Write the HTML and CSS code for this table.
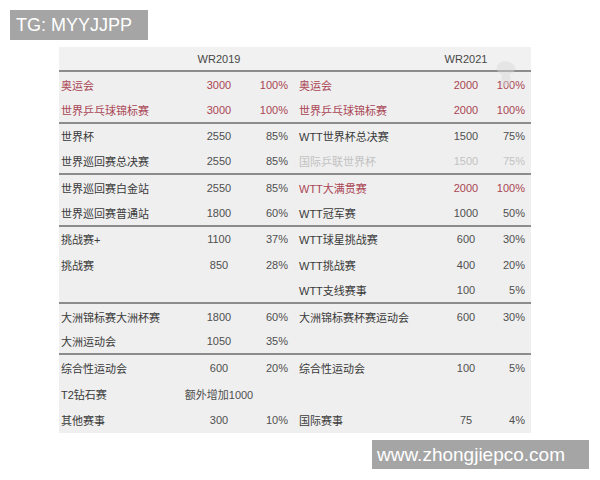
FILE: index.html
```html
<!DOCTYPE html>
<html lang="zh">
<head>
<meta charset="utf-8">
<title>WR2019 / WR2021</title>
<link rel="stylesheet" href="styles.css">
</head>
<body>
<div class="page">
  <div class="table">
    <div class="row head sep">
      <span class="c1"></span><span class="c2">WR2019</span><span class="c3"></span>
      <span class="c4"></span><span class="c5">WR2021</span><span class="c6"></span>
    </div>
    <div class="row red">
      <span class="c1">奥运会</span><span class="c2">3000</span><span class="c3">100%</span>
      <span class="c4">奥运会</span><span class="c5">2000</span><span class="c6">100%</span>
    </div>
    <div class="row red sep">
      <span class="c1">世界乒乓球锦标赛</span><span class="c2">3000</span><span class="c3">100%</span>
      <span class="c4">世界乒乓球锦标赛</span><span class="c5">2000</span><span class="c6">100%</span>
    </div>
    <div class="row">
      <span class="c1">世界杯</span><span class="c2">2550</span><span class="c3">85%</span>
      <span class="c4">WTT世界杯总决赛</span><span class="c5">1500</span><span class="c6">75%</span>
    </div>
    <div class="row sep">
      <span class="c1">世界巡回赛总决赛</span><span class="c2">2550</span><span class="c3">85%</span>
      <span class="c4 faded">国际乒联世界杯</span><span class="c5 faded">1500</span><span class="c6 faded">75%</span>
    </div>
    <div class="row">
      <span class="c1">世界巡回赛白金站</span><span class="c2">2550</span><span class="c3">85%</span>
      <span class="c4 redt">WTT大满贯赛</span><span class="c5 redt">2000</span><span class="c6 redt">100%</span>
    </div>
    <div class="row sep">
      <span class="c1">世界巡回赛普通站</span><span class="c2">1800</span><span class="c3">60%</span>
      <span class="c4">WTT冠军赛</span><span class="c5">1000</span><span class="c6">50%</span>
    </div>
    <div class="row">
      <span class="c1">挑战赛+</span><span class="c2">1100</span><span class="c3">37%</span>
      <span class="c4">WTT球星挑战赛</span><span class="c5">600</span><span class="c6">30%</span>
    </div>
    <div class="row">
      <span class="c1">挑战赛</span><span class="c2">850</span><span class="c3">28%</span>
      <span class="c4">WTT挑战赛</span><span class="c5">400</span><span class="c6">20%</span>
    </div>
    <div class="row sep">
      <span class="c1"></span><span class="c2"></span><span class="c3"></span>
      <span class="c4">WTT支线赛事</span><span class="c5">100</span><span class="c6">5%</span>
    </div>
    <div class="row">
      <span class="c1">大洲锦标赛大洲杯赛</span><span class="c2">1800</span><span class="c3">60%</span>
      <span class="c4">大洲锦标赛杯赛运动会</span><span class="c5">600</span><span class="c6">30%</span>
    </div>
    <div class="row sep">
      <span class="c1">大洲运动会</span><span class="c2">1050</span><span class="c3">35%</span>
      <span class="c4"></span><span class="c5"></span><span class="c6"></span>
    </div>
    <div class="row">
      <span class="c1">综合性运动会</span><span class="c2">600</span><span class="c3">20%</span>
      <span class="c4">综合性运动会</span><span class="c5">100</span><span class="c6">5%</span>
    </div>
    <div class="row">
      <span class="c1">T2钻石赛</span><span class="c2">额外增加1000</span><span class="c3"></span>
      <span class="c4"></span><span class="c5"></span><span class="c6"></span>
    </div>
    <div class="row">
      <span class="c1">其他赛事</span><span class="c2">300</span><span class="c3">10%</span>
      <span class="c4">国际赛事</span><span class="c5">75</span><span class="c6">4%</span>
    </div>
    <svg class="blob" width="28" height="30" viewBox="0 0 28 30" aria-hidden="true">
      <path d="M9 3 C14 1 21 3 23 8 C24 12 21 14 18 15 L19 26 C16 28 12 28 9 27 L10 16 C6 14 4 11 5 7 C6 5 7 4 9 3 Z" fill="#d6d6d6" opacity="0.45"/>
    </svg>
  </div>
  <div class="mark mark-top">TG: MYYJJPP</div>
  <div class="mark mark-bottom">www.zhongjiepco.com</div>
</div>
</body>
</html>
```
FILE: styles.css
```css
html, body {
  margin: 0;
  padding: 0;
  background: #ffffff;
}

.page {
  position: relative;
  width: 600px;
  height: 480px;
  padding: 47px 0 0 59px;
  box-sizing: border-box;
  font-family: "Liberation Sans", "Noto Sans CJK SC", sans-serif;
}

.table {
  position: relative;
  width: 472px;
  background: #efefef;
  color: #3a3a3a;
  font-size: 11px;
}

.row {
  display: grid;
  grid-template-columns: 131px 58px 42px 147px 58px 36px;
  height: 25.75px;
  align-items: center;
  box-sizing: border-box;
  white-space: nowrap;
}

.row.head {
  height: 25px;
  background: #f1f1f1;
  color: #484848;
}

.row.sep {
  border-bottom: 2px solid #8c8c8c;
}

.c1 { padding-left: 2px; }
.c2, .c5 {
  display: flex;
  justify-content: center;
  color: #505050;
}
.c3 { text-align: right; padding-right: 2px; color: #505050; }
.c4 { padding-left: 9px; }
.c6 { text-align: right; padding-right: 6px; color: #505050; }

.row.head .c2, .row.head .c5 {
  color: #484848;
}

.red span, .row .redt {
  color: #aa4553;
}

.row .faded {
  color: #c2c2c2;
}

.blob {
  position: absolute;
  left: 433px;
  top: 12px;
}

.mark {
  position: absolute;
  background: #a5a5a5;
  color: #ffffff;
  line-height: 30px;
  height: 30px;
  box-sizing: border-box;
  font-family: "Liberation Sans", sans-serif;
}

.mark-top {
  left: 10px;
  top: 10px;
  width: 138px;
  padding-left: 6px;
  font-size: 18px;
}

.mark-bottom {
  left: 372px;
  top: 440px;
  width: 217px;
  height: 29px;
  line-height: 29px;
  padding-left: 5px;
  font-size: 19px;
}
```
